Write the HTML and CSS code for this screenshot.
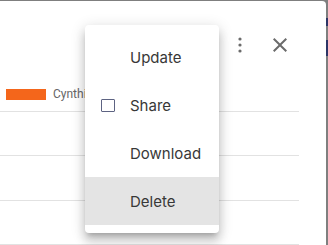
FILE: index.html
```html
<!DOCTYPE html>
<html lang="en">
<head>
    <meta charset="UTF-8">
    <meta name="viewport" content="width=device-width, initial-scale=1.0">
    <title>Chart Details</title>
    <link rel="stylesheet" href="styles.css">
</head>
<body>
    <div class="dialog">
        <header class="dialog-header">
            <button class="icon-btn" aria-label="More options">
                <svg width="24" height="24" viewBox="0 0 24 24">
                    <circle cx="12" cy="6" r="1.6"></circle>
                    <circle cx="12" cy="12" r="1.6"></circle>
                    <circle cx="12" cy="18" r="1.6"></circle>
                </svg>
            </button>
            <button class="icon-btn close-btn" aria-label="Close">
                <svg width="24" height="24" viewBox="0 0 24 24">
                    <path d="M19 6.41L17.59 5 12 10.59 6.41 5 5 6.41 10.59 12 5 17.59 6.41 19 12 13.41 17.59 19 19 17.59 13.41 12z"></path>
                </svg>
            </button>
        </header>

        <div class="legend">
            <span class="legend-swatch"></span>
            <span class="legend-label">Cynthia</span>
        </div>

        <div class="row row-short"></div>
        <div class="row"></div>
        <div class="row row-short"></div>

        <!-- open actions menu -->
        <ul class="menu">
            <li class="menu-item"><span class="slot"></span>Update</li>
            <li class="menu-item"><span class="slot checkbox"></span>Share</li>
            <li class="menu-item"><span class="slot"></span>Download</li>
            <li class="menu-item active"><span class="slot"></span>Delete</li>
        </ul>
    </div>

    <div class="backdrop-strip">
        <span class="strip-mark mark-one"></span>
        <span class="strip-mark mark-two"></span>
    </div>
</body>
</html>
```

FILE: styles.css
```css
* {
    margin: 0;
    padding: 0;
    box-sizing: border-box;
}

body {
    width: 328px;
    height: 245px;
    overflow: hidden;
    background: #7f7f7f;
    display: flex;
    font-family: "Inter", "Roboto", sans-serif;
}

.dialog {
    position: relative;
    width: 326px;
    height: 244px;
    margin-top: 1px;
    background: #fff;
    border-top-right-radius: 4px;
    padding-top: 20px;
    padding-right: 27px;
}

.dialog-header {
    height: 48px;
    display: flex;
    justify-content: flex-end;
    align-items: center;
    gap: 16px;
    padding-right: 7px;
}

.icon-btn {
    width: 24px;
    height: 24px;
    border: none;
    background: none;
    display: flex;
}

.icon-btn svg {
    fill: #6b6b6b;
}

.legend {
    height: 43px;
    padding-top: 20px;
    display: flex;
    align-items: flex-start;
    border-bottom: 1px solid #e2e2e2;
}

.legend-swatch {
    width: 40px;
    height: 11px;
    margin-left: 6px;
    background: #f4661b;
}

.legend-label {
    margin-left: 7px;
    font-family: "Roboto", "Liberation Sans", sans-serif;
    font-size: 12px;
    line-height: 11px;
    color: #666;
}

.row {
    height: 45px;
    border-bottom: 1px solid #e2e2e2;
}

.row-short {
    height: 44px;
}

.menu {
    position: absolute;
    left: 85px;
    top: 24px;
    width: 134px;
    padding: 8px 0;
    list-style: none;
    background: #fff;
    border-radius: 4px;
    box-shadow: 0 5px 5px -3px rgba(0, 0, 0, 0.2),
                0 8px 10px 1px rgba(0, 0, 0, 0.14),
                0 3px 14px 2px rgba(0, 0, 0, 0.12);
}

.menu-item {
    height: 48px;
    display: flex;
    align-items: center;
    padding-left: 16px;
    font-size: 15px;
    color: #383838;
}

.menu-item.active {
    background: #e4e4e4;
}

.slot {
    width: 14px;
    height: 13px;
    margin-right: 15px;
}

.checkbox {
    border: 1px solid #5d6382;
    border-radius: 1px;
}

.backdrop-strip {
    width: 2px;
    padding-top: 18px;
    display: flex;
    flex-direction: column;
}

.strip-mark {
    width: 2px;
    background: #2c3566;
}

.mark-one {
    height: 8px;
}

.mark-two {
    height: 16px;
    margin-top: 14px;
}
```
